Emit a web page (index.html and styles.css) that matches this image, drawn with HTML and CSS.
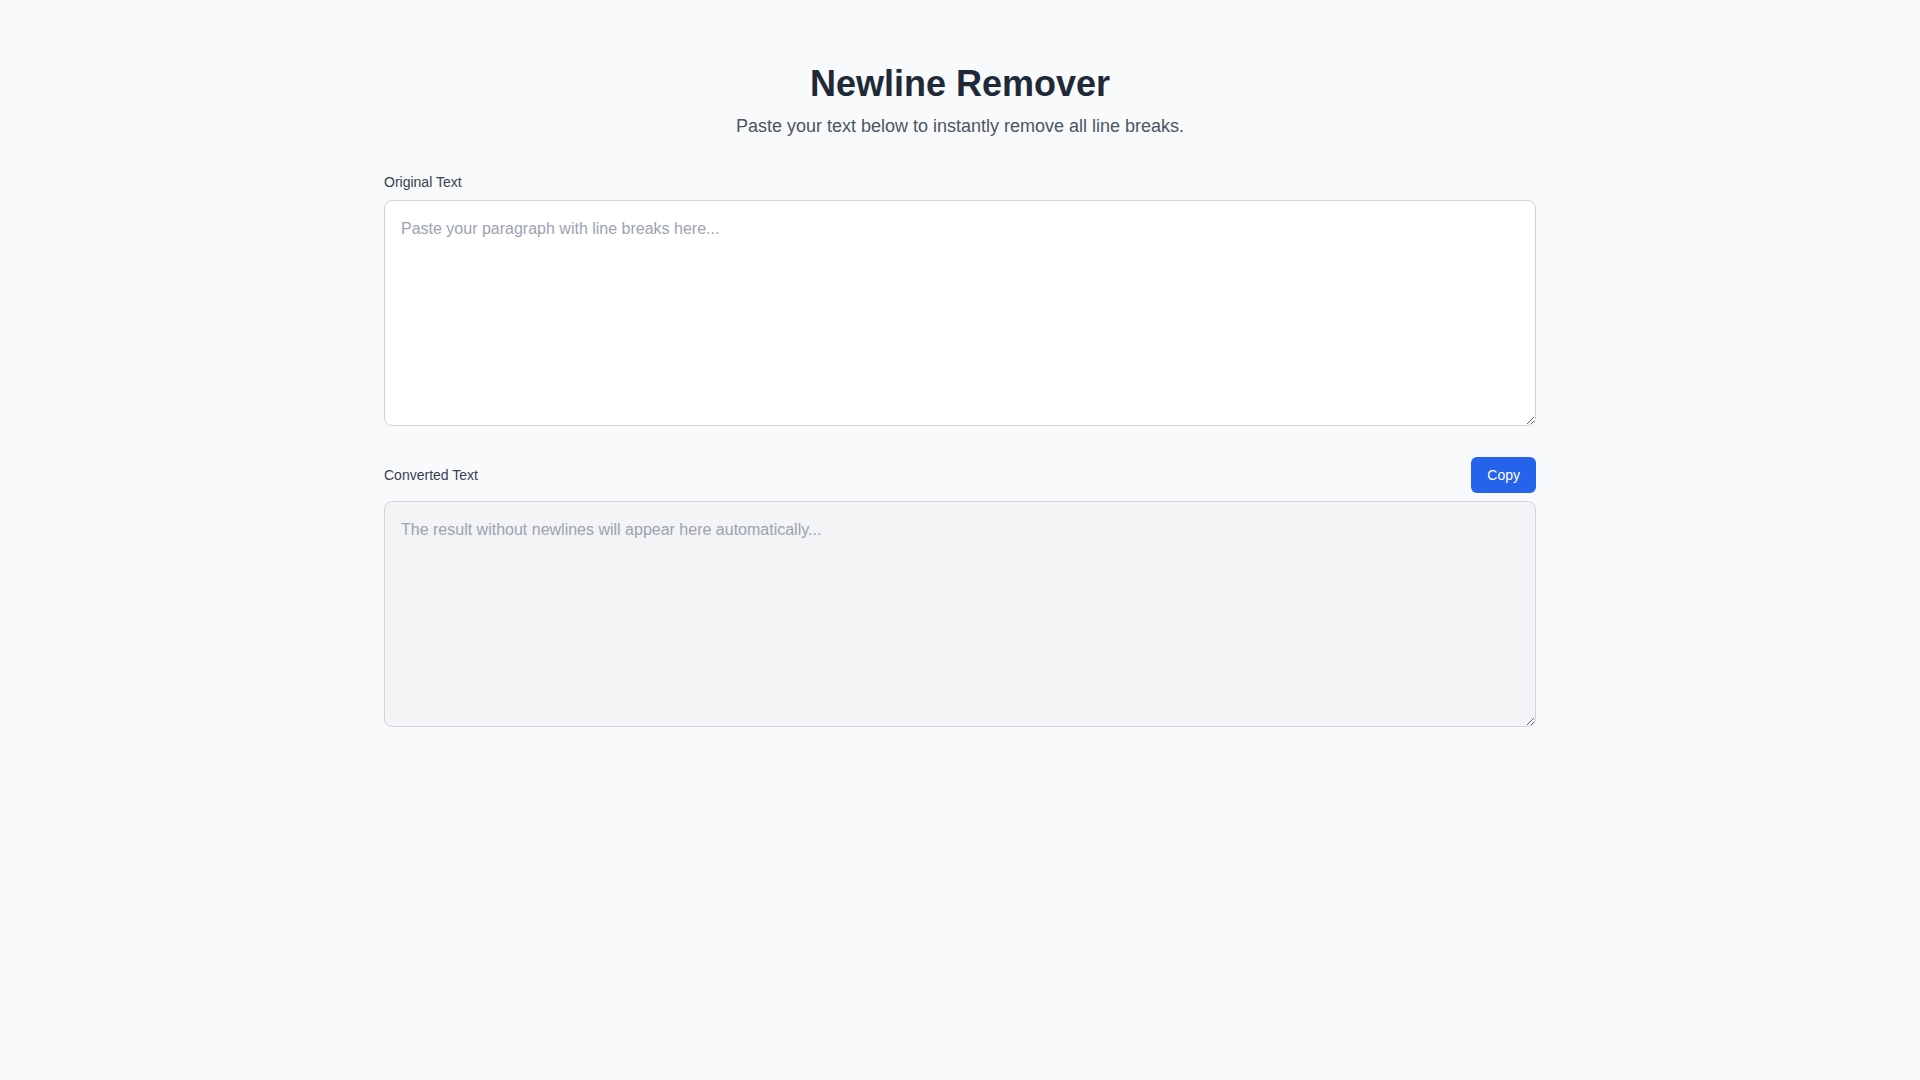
FILE: index.html
```html
<!DOCTYPE html>
<html lang="en">
<head>
<meta charset="utf-8">
<title>Newline Remover</title>
<link rel="stylesheet" href="styles.css">
</head>
<body>
<main class="container">
  <header class="header">
    <h1 class="title">Newline Remover</h1>
    <p class="subtitle">Paste your text below to instantly remove all line breaks.</p>
  </header>
  <section class="field">
    <div class="field-head">
      <label class="label" for="input">Original Text</label>
    </div>
    <textarea id="input" class="box" placeholder="Paste your paragraph with line breaks here..."></textarea>
  </section>
  <section class="field">
    <div class="field-head field-head-row">
      <label class="label" for="output">Converted Text</label>
      <button class="copy-btn" type="button">Copy</button>
    </div>
    <textarea id="output" class="box box-readonly" readonly placeholder="The result without newlines will appear here automatically..."></textarea>
  </section>
</main>
</body>
</html>
```

FILE: styles.css
```css
* { box-sizing: border-box; }
html, body {
  margin: 0;
  padding: 0;
  background: #f9fafb;
  font-family: "Liberation Sans", Arial, sans-serif;
  color: #1f2937;
}
.container {
  width: 1152px;
  margin: 0 auto;
  padding-top: 64px;
}
.header {
  text-align: center;
  margin-bottom: 32px;
}
.title {
  margin: 0;
  font-size: 36px;
  line-height: 40px;
  font-weight: 700;
  color: #1f2937;
}
.subtitle {
  margin: 8px 0 0;
  font-size: 18px;
  line-height: 28px;
  color: #4b5563;
}
.field {
  margin-bottom: 31px;
}
.field-head {
  margin-bottom: 8px;
}
.field-head-row {
  display: flex;
  align-items: center;
  justify-content: space-between;
  height: 36px;
}
.label {
  display: block;
  font-size: 14px;
  line-height: 20px;
  font-weight: 500;
  color: #374151;
}
.box {
  display: block;
  width: 100%;
  height: 226px;
  padding: 16px;
  border: 1px solid #d1d5db;
  border-radius: 8px;
  background: #ffffff;
  font-family: "Liberation Sans", Arial, sans-serif;
  font-size: 16px;
  line-height: 24px;
  color: #1f2937;
  resize: vertical;
  outline: none;
  margin: 0;
}
.box::placeholder {
  color: #9ca3af;
}
.box-readonly {
  background: #f3f4f6;
}
.copy-btn {
  height: 36px;
  padding: 0 16px;
  border: none;
  border-radius: 6px;
  background: #2563eb;
  color: #ffffff;
  font-family: "Liberation Sans", Arial, sans-serif;
  font-size: 14px;
  line-height: 20px;
  cursor: pointer;
}
```
